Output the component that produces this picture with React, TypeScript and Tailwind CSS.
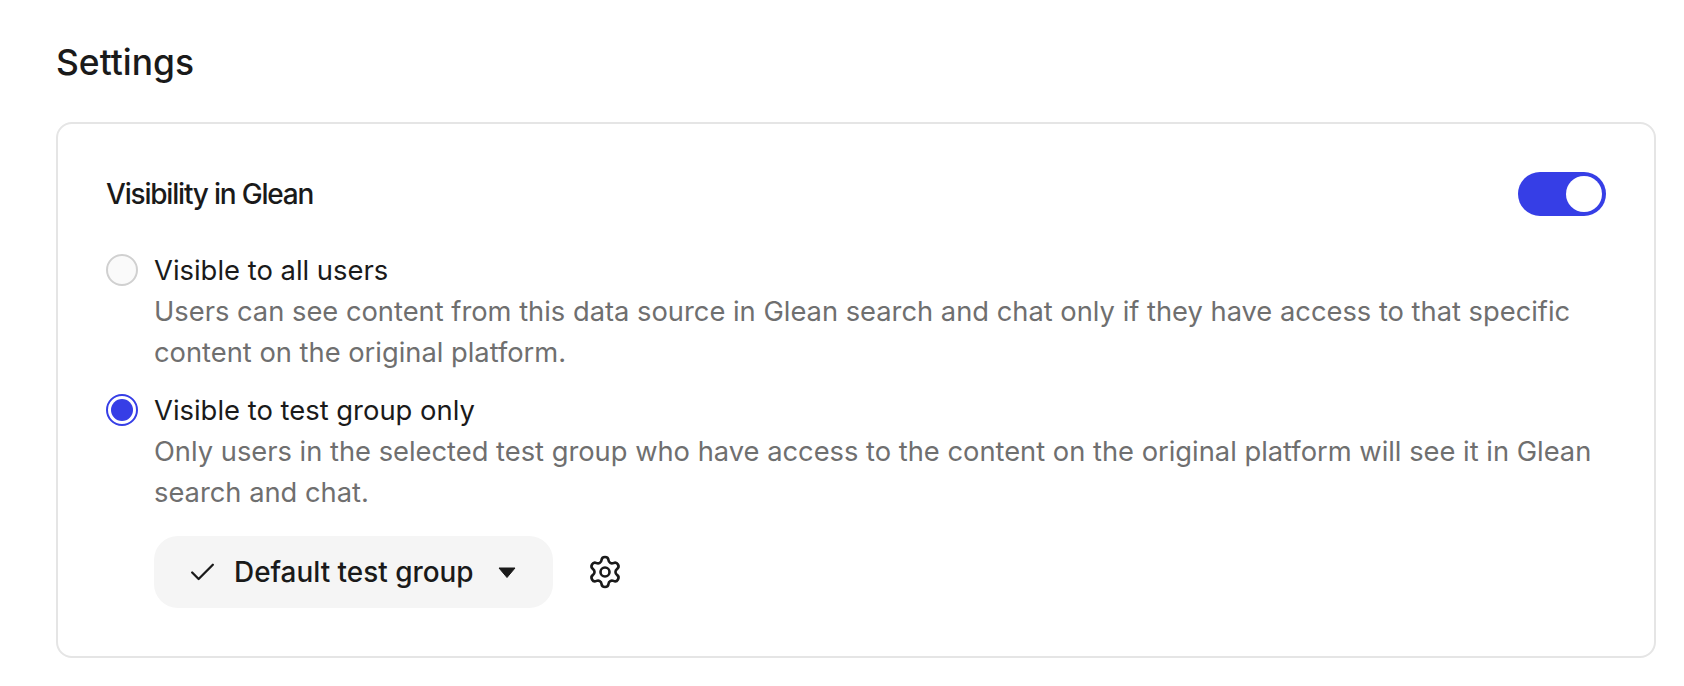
import { Check, Settings } from 'lucide-react';

const font = "font-['Inter',sans-serif]";

function Radio({ checked }: { checked?: boolean }) {
  if (checked) {
    return (
      <span className="w-8 h-8 rounded-full border-2 border-[#363ee6] bg-white flex items-center justify-center shrink-0">
        <span className="w-[22px] h-[22px] rounded-full bg-[#363ee6]" />
      </span>
    );
  }
  return <span className="w-8 h-8 rounded-full border-2 border-[#d0d0d0] bg-[#fafafa] shrink-0" />;
}

function Option({ checked, label, children }: { checked?: boolean; label: string; children: string }) {
  return (
    <div className="flex gap-4">
      <div className="h-[42px] flex items-center">
        <Radio checked={checked} />
      </div>
      <div>
        <div className="text-[27.4px] leading-[42px] text-[#1a1a1a]">{label}</div>
        <div className="mt-px text-[27.3px] leading-[40.5px] text-[#6f6f6f]">{children}</div>
      </div>
    </div>
  );
}

export default function App() {
  return (
    <div className={`w-[1684px] h-[686px] bg-white overflow-hidden pl-[56px] pr-[28px] pt-[41px] ${font}`}>
      <h1 className="text-[35.4px] leading-[44px] font-medium text-[#1a1a1a]">Settings</h1>
      <div className="mt-[37px] h-[536px] border-2 border-[#e5e5e5] rounded-[16px] pl-[48px] pr-[48px] pt-[48px]">
        <div className="flex items-center justify-between h-11">
          <span className="text-[28px] font-medium tracking-[-1.2px] text-[#1a1a1a]">Visibility in Glean</span>
          <span className="w-[88px] h-11 rounded-full bg-[#363ee6] flex items-center justify-end p-1">
            <span className="w-9 h-9 rounded-full bg-white" />
          </span>
        </div>
        <div className="mt-[33px] flex flex-col gap-[16px]">
          <Option label="Visible to all users">
            Users can see content from this data source in Glean search and chat only if they have access to that specific content on the original platform.
          </Option>
          <Option checked label="Visible to test group only">
            Only users in the selected test group who have access to the content on the original platform will see it in Glean search and chat.
          </Option>
        </div>
        <div className="mt-[23px] ml-[48px] flex items-center gap-[34px]">
          <button className="w-[399px] h-[72px] rounded-[24px] bg-[#f5f5f5] flex items-center pl-[33px] text-[#1a1a1a]">
            <Check size={31} strokeWidth={1.8} />
            <span className="ml-[16px] pt-[2px] text-[27.9px] font-medium">Default test group</span>
            <svg className="ml-6" width="18" height="11" viewBox="0 0 18 11">
              <path d="M1 1h16l-8 9.5z" fill="#1a1a1a" stroke="#1a1a1a" strokeWidth="1" strokeLinejoin="round" />
            </svg>
          </button>
          <Settings size={36} strokeWidth={1.75} className="text-[#1a1a1a]" />
        </div>
      </div>
    </div>
  );
}
